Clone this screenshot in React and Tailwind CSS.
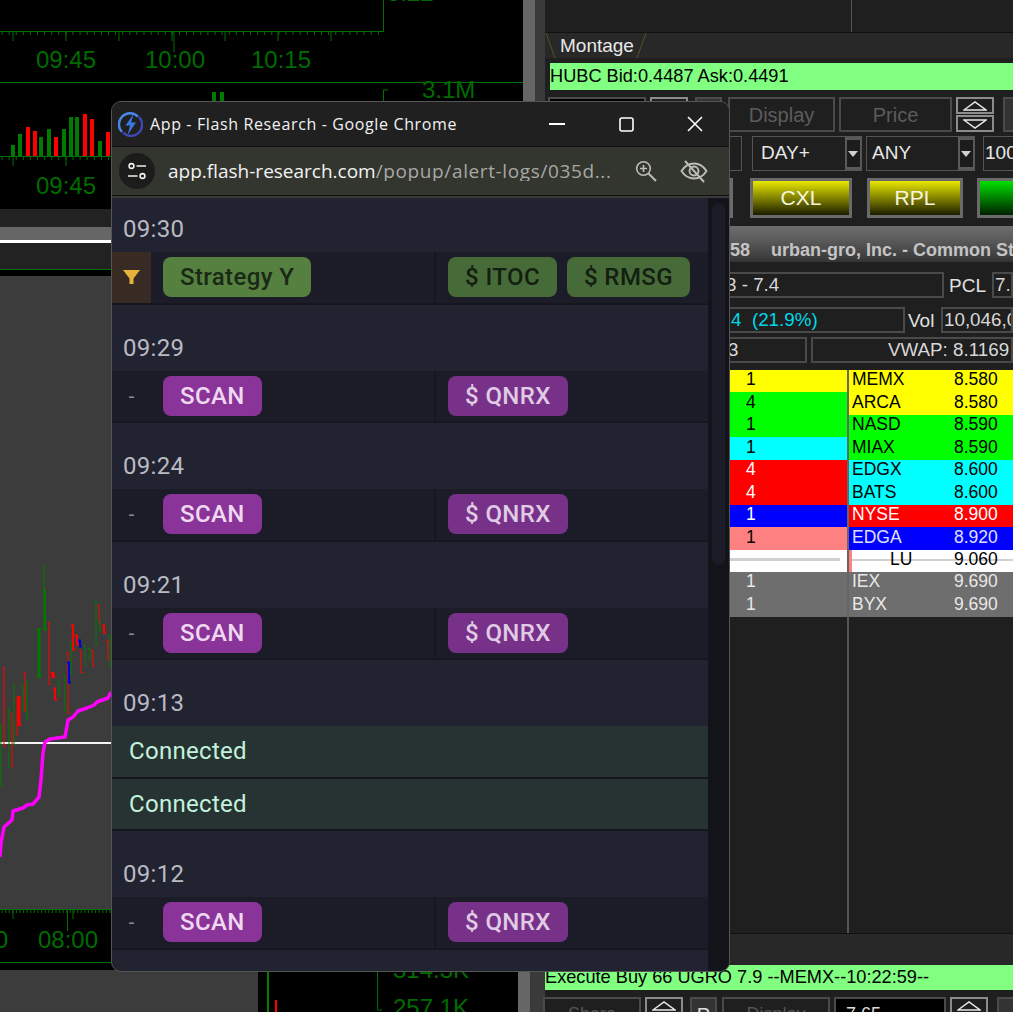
import React from 'react';

const arial = 'font-["Liberation_Sans",Arial,sans-serif]';
const chrome = 'font-["Open_Sans","Noto_Sans",sans-serif]';
const roboto = 'font-["Roboto",sans-serif]';

const volumeBars = [
  [11, 145, 'g'], [18, 134, 'g'], [26, 127, 'r'], [33, 131, 'r'], [39, 137, 'g'], [47, 129, 'g'], [54, 137, 'r'],
  [62, 129, 'g'], [69, 117, 'g'], [75, 117, 'g'], [83, 114, 'r'], [90, 119, 'r'], [98, 141, 'g'], [106, 132, 'r'],
  [212, 92, 'g'], [220, 92, 'g'],
];

const candles = [
  ['r', 4, 667, 747], ['g', 1, 724, 786], ['g', 9, 708, 768], ['g', 14, 684, 745], ['r', 12, 713, 767],
  ['r', 17, 700, 735], ['r', 19, 697, 725, 3], ['g', 23, 685, 712], ['r', 25, 672, 712], ['g', 27, 680, 720],
  ['g', 39, 629, 677, 3], ['g', 44, 565, 630], ['g', 45, 590, 630, 2], ['r', 49, 622, 685], ['r', 53, 673, 677, 3],
  ['r', 55, 688, 700, 2], ['g', 59, 680, 695], ['g', 65, 675, 712], ['r', 68, 652, 714], ['b', 69, 662, 683, 2],
  ['g', 71, 642, 675], ['r', 73, 625, 650, 2], ['r', 77, 635, 645, 2], ['b', 80, 640, 647, 2], ['r', 81, 650, 673],
  ['g', 85, 645, 665], ['g', 90, 648, 660], ['r', 93, 650, 667], ['g', 96, 600, 645], ['r', 99, 605, 623],
  ['r', 104, 625, 633, 2], ['g', 100, 620, 632], ['r', 108, 640, 660], ['g', 110, 635, 667],
];

const colors = { r: '#ff0000', g: '#007a00', b: '#0000e0' };

const vwapLine =
  '0,857 1,843 4,827 12,820 13,811 23,808 27,805 33,804 39,797 41,780 43,753 45,742 50,739 65,737 68,720 73,717 78,711 87,708 94,705 97,702 108,698 111,692';

const depthRows = [
  { size: '1', left: 'bg-[#ffff00] text-black', name: 'MEMX', price: '8.580', right: 'bg-[#ffff00] text-black' },
  { size: '4', left: 'bg-[#00ff00] text-black', name: 'ARCA', price: '8.580', right: 'bg-[#ffff00] text-black' },
  { size: '1', left: 'bg-[#00ff00] text-black', name: 'NASD', price: '8.590', right: 'bg-[#00ff00] text-black' },
  { size: '1', left: 'bg-[#00ffff] text-black', name: 'MIAX', price: '8.590', right: 'bg-[#00ff00] text-black' },
  { size: '4', left: 'bg-[#ff0000] text-white', name: 'EDGX', price: '8.600', right: 'bg-[#00ffff] text-black' },
  { size: '4', left: 'bg-[#ff0000] text-white', name: 'BATS', price: '8.600', right: 'bg-[#00ffff] text-black' },
  { size: '1', left: 'bg-[#0000ff] text-white', name: 'NYSE', price: '8.900', right: 'bg-[#ff0000] text-white' },
  { size: '1', left: 'bg-[#ff8080] text-black', name: 'EDGA', price: '8.920', right: 'bg-[#0000ff] text-[#e0e0ff]' },
  { size: '', left: 'bg-white text-black', name: 'LU', limit: true, price: '9.060', right: 'bg-white text-black' },
  { size: '1', left: 'bg-[#6e6e6e] text-[#e8e8e8]', name: 'IEX', price: '9.690', right: 'bg-[#6e6e6e] text-[#e8e8e8]' },
  { size: '1', left: 'bg-[#6e6e6e] text-[#e8e8e8]', name: 'BYX', price: '9.690', right: 'bg-[#6e6e6e] text-[#e8e8e8]' },
];

const Ticks = ({ width, major = 53, minor = 7.1 }) => {
  const out = [];
  for (let x = 2; x < width; x += minor) out.push(<line key={x} x1={x} x2={x} y1="0" y2="4" />);
  for (let x = 13; x < width; x += major) out.push(<line key={`m${x}`} x1={x} x2={x} y1="0" y2="10" />);
  return out;
};

const TimeLabel = ({ className, children }) => (
  <span className={`absolute text-[24px] leading-none text-[#006c00] ${arial} ${className}`}>{children}</span>
);

const Spinner = ({ className = '' }) => (
  <div className={`shrink-0 flex flex-col gap-[1px] w-[38px] h-[35px] ${className}`}>
    <div className="flex-1 flex items-center justify-center border-2 border-[#8c8c8c]">
      <svg width="24" height="10" viewBox="0 0 24 10"><path d="M1 9 12 1 23 9Z" fill="none" stroke="#e8e8e8" strokeWidth="1.5" /></svg>
    </div>
    <div className="flex-1 flex items-center justify-center border-2 border-[#8c8c8c]">
      <svg width="24" height="10" viewBox="0 0 24 10"><path d="M1 1 12 9 23 1Z" fill="none" stroke="#e8e8e8" strokeWidth="1.5" /></svg>
    </div>
  </div>
);

const Box = ({ className = '', children }) => (
  <div className={`shrink-0 h-[35px] flex items-center justify-center border-2 border-[#4a4a4a] text-[20px] ${className}`}>{children}</div>
);

const OrderButton = ({ className, children }) => (
  <div className={`shrink-0 h-[40px] flex items-center justify-center border-[3px] border-[#6a6a6a] text-[21px] text-[#f6f6e0] ${className}`}>
    {children}
  </div>
);

const Field = ({ className, children }) => (
  <div className={`shrink-0 flex items-center h-[26px] border-2 border-[#4a4a4a] text-[18.800px] text-[#d8d8d8] whitespace-nowrap overflow-hidden ${className}`}>
    {children}
  </div>
);

const Combo = ({ className, labelClass = 'pl-[8px]', label }) => (
  <div className={`shrink-0 h-[35px] flex border border-[#555] ${className}`}>
    <div className={`flex-1 flex items-center text-[19px] text-[#e8e8e8] ${labelClass}`}>{label}</div>
    <div className="w-[16px] bg-[#5a5a5a] flex items-center justify-center">
      <div className="w-[13px] h-[27px] bg-[#1c1c1c] flex items-center justify-center">
        <svg width="10" height="6" viewBox="0 0 10 6"><path d="M0 0H10L5 6Z" fill="#cfcfcf" /></svg>
      </div>
    </div>
  </div>
);

const LeftCharts = () => (
  <>
    {/* top chart */}
    <div className="absolute left-0 top-0 w-[523px] h-[209px] bg-black">
      <svg className="absolute left-0 top-0" width="523" height="209" stroke="#007000" fill="none">
        <path d="M0 31.5H383.5V0" />
        <g transform="translate(0 31)"><Ticks width="380" /></g>
        <line x1="174" x2="174" y1="31" y2="52" />
        <line x1="0" x2="523" y1="82.5" y2="82.5" />
        <path d="M388 90H383.5V102" />
        <line x1="0" x2="112" y1="156.5" y2="156.5" />
        <g transform="translate(0 156)"><Ticks width="112" /></g>
        {volumeBars.map(([x, top, c], i) => (
          <rect key={i} x={x} y={top} width="4" height={156 - top} fill={colors[c]} stroke="none" />
        ))}
      </svg>
      <TimeLabel className="left-[36px] top-[48px]">09:45</TimeLabel>
      <TimeLabel className="left-[145px] top-[48px]">10:00</TimeLabel>
      <TimeLabel className="left-[251px] top-[48px]">10:15</TimeLabel>
      <TimeLabel className="left-[387px] top-[-19px]">5.22</TimeLabel>
      <TimeLabel className="left-[422px] top-[78px]">3.1M</TimeLabel>
      <TimeLabel className="left-[36px] top-[174px]">09:45</TimeLabel>
    </div>

    {/* lower chart, header strips then the price pane */}
    <div className="absolute left-0 top-[209px] w-[258px] h-[803px] flex flex-col bg-[#3c3c3c]">
      <div className="h-[18px] bg-[#222]" />
      <div className="h-[13px] bg-[#666]" />
      <div className="h-[3px] bg-white" />
      <div className="h-[27px] bg-[#222] border-b border-[#007000]" />
      <div className="h-[6px] bg-black" />
      <div className="relative flex-1">
        <svg className="absolute left-0 top-0" width="258" height="700" viewBox="0 276 258 700" fill="none">
          <rect x="0" y="742" width="258" height="2" fill="#f4f4f4" />
          {candles.map(([c, x, y1, y2, w], i) => (
            <polyline
              key={i}
              points={`${x - 2},${y1 + 0.5} ${x},${y1 + 0.5} ${x},${y2 - 0.5} ${x + 2},${y2 - 0.5}`}
              stroke={colors[c]}
              strokeWidth={w || 1}
            />
          ))}
          <polyline points={vwapLine} stroke="#ff00ff" strokeWidth="3.500" strokeLinejoin="round" />
        </svg>
      </div>
      <div className="relative h-[61px] bg-black">
        <svg className="absolute left-0 top-0" width="258" height="61" stroke="#007000" fill="none">
          <line x1="0" x2="258" y1="0.5" y2="0.5" />
          <Ticks width="258" major={60} minor={3.6} />
          <line x1="67.500" x2="67.500" y1="0" y2="22" />
          <line x1="0" x2="258" y1="53.500" y2="53.500" />
        </svg>
        <TimeLabel className="left-[-52px] top-[19px] w-[60px] text-right">0</TimeLabel>
        <TimeLabel className="left-[38px] top-[19px]">08:00</TimeLabel>
      </div>
      <div className="h-[42px] bg-[#3c3c3c]" />
    </div>

    {/* volume pane bottom */}
    <div className="absolute left-[258px] top-[950px] w-[260px] h-[62px] bg-black">
      <svg className="absolute left-0 top-0" width="260" height="62" fill="none">
        <line x1="10" x2="10" y1="10" y2="62" stroke="#008000" strokeWidth="2" />
        <path d="M119.500 10V60H124" stroke="#007000" />
        <path d="M18 50V62" stroke="#ff0000" strokeWidth="2" />
      </svg>
      <TimeLabel className="left-[135px] top-[8px]">314.3K</TimeLabel>
      <TimeLabel className="left-[135px] top-[46px]">257.1K</TimeLabel>
    </div>
  </>
);

const TopMontage = () => (
  <div className={`absolute left-[523px] top-0 w-[490px] h-[960px] flex overflow-hidden bg-[#1f1f1f] ${arial}`}>
    <div className="w-[12px] shrink-0 bg-[#666]" />
    <div className="w-[10px] shrink-0 bg-[#3a3a3a]" />
    <div className="w-[468px] shrink-0 flex flex-col [&>*]:shrink-0">
      <div className="h-[32px] pl-[306px]"><div className="w-px h-full bg-[#555]" /></div>
      <div className="relative h-[26px] flex bg-[#282828] border-t border-[#111]">
        <svg className="absolute left-0 top-0" width="104" height="26" fill="none" stroke="#5c5220">
          <path d="M1 0 10 25M101 0 92 25" />
        </svg>
        <span className="pl-[15px] text-[19px] leading-[26px] text-[#e8e8e8]">Montage</span>
      </div>

      <div className="mt-[5px] ml-[5px] h-[27px] flex items-center bg-[#80ff80] text-black text-[18.200px] leading-none whitespace-nowrap">
        HUBC Bid:0.4487 Ask:0.4491
      </div>

      {/* order entry rows */}
      <div className="mt-[7px] ml-[3px] flex h-[35px]">
        <Box className="w-[98px] mr-[4px] bg-black" />
        <Spinner className="mr-[7px]" />
        <Box className="w-[27px] mr-[6px] bg-[#333]" />
        <Box className="w-[107px] mr-[4px] text-[#5c5c5c]">Display</Box>
        <Box className="w-[113px] mr-[4px] text-[#5c5c5c]">Price</Box>
        <Spinner className="mr-[9px]" />
        <Box className="w-[30px] bg-[#333]" />
      </div>
      <div className="mt-[4px] ml-[3px] flex h-[35px]">
        <div className="w-[194px] shrink-0 mr-[10px] border border-[#555]" />
        <Combo className="w-[110px] mr-[4px]" label="DAY+" />
        <Combo className="w-[109px] mr-[8px]" labelClass="pl-[5px]" label="ANY" />
        <div className="flex-1 flex items-center text-[19px] text-[#e8e8e8] border-y border-l border-[#555] pl-[1px] whitespace-nowrap">100</div>
      </div>
      <div className="mt-[7px] ml-[3px] flex">
        <OrderButton className="w-[185px] mr-[17px] bg-[linear-gradient(#ff6060,#400000)]" />
        <OrderButton className="w-[102px] mr-[15px] bg-[linear-gradient(#e8e800,#1c1c00)]">CXL</OrderButton>
        <OrderButton className="w-[96px] mr-[14px] bg-[linear-gradient(#e8e800,#1c1c00)]">RPL</OrderButton>
        <OrderButton className="flex-1 border-r-0 bg-[linear-gradient(#00e000,#002000)]" />
      </div>

      <div className="mt-[8px] h-[36px] flex gap-[21px] pt-[12px] pl-[185px] overflow-hidden whitespace-nowrap bg-[linear-gradient(#6e6e6e,#5a5a5a_40%,#343434)] font-bold text-[18px] leading-[24px] text-[#c4c4c4]">
        <span>58</span>
        <span>urban-gro, Inc. - Common Stock</span>
      </div>

      <div className="mt-[10px] ml-[3px] flex items-center h-[26px]">
        <Field className="w-[396px] pl-[176px]">3 - 7.4</Field>
        <span className="w-[48px] pl-[5px] text-[19px] leading-none text-[#e0e0e0]">PCL</span>
        <Field className="flex-1 pl-[1px]">7.0</Field>
      </div>
      <div className="mt-[9px] ml-[3px] flex items-center h-[26px]">
        <Field className="w-[357px] pl-[181px] text-[#00d8e8]!">4&nbsp;&nbsp;(21.9%)</Field>
        <span className="w-[36px] pl-[3px] text-[19px] leading-none text-[#e0e0e0]">Vol</span>
        <Field className="flex-1 pl-[1px]">10,046,0</Field>
      </div>
      <div className="mt-[4px] ml-[3px] flex h-[26px]">
        <Field className="w-[259px] mr-[4px] pl-[178px]">3</Field>
        <Field className="flex-1 pl-[75px]">VWAP: 8.1169</Field>
      </div>

      {/* depth */}
      <div className="mt-[7px] flex flex-col text-[17.500px] leading-none">
        {depthRows.map((row, i) => (
          <div key={i} className="flex h-[22.450px]">
            <div className={`w-[302px] flex items-center pl-[201px] pb-[2px] ${row.left}`}>
              {row.limit ? <div className="w-[113px] h-[3px] -ml-[19px] bg-[#d0d0d0]" /> : row.size}
            </div>
            <div className="w-[2px] bg-[#666]" />
            <div className={`relative flex-1 flex items-center pb-[2px] pl-[3px] ${row.right}`}>
              {row.limit && (
                <>
                  <div className="absolute left-0 top-0 w-[3px] h-full bg-[#ff8080]" />
                  <div className="absolute left-[3px] right-0 top-[9px] h-[2px] bg-[#d0d0d0]" />
                </>
              )}
              <span className={`relative w-[102px] ${row.limit ? 'pl-[38px]' : ''}`}>{row.name}</span>
              <span className="relative w-[43px] text-right">{row.price}</span>
            </div>
          </div>
        ))}
      </div>
      <div className="flex-1 pl-[302px]"><div className="w-[2px] h-[316px] bg-[#555]" /></div>
      <div className="h-[27px] bg-[#282828] border-t border-[#111]" />
    </div>
  </div>
);

const BottomMontage = () => (
  <div className={`absolute left-[518px] top-[960px] w-[495px] h-[52px] flex overflow-hidden bg-[#1f1f1f] ${arial}`}>
    <div className="w-[12px] shrink-0 bg-[#666]" />
    <div className="w-[15px] shrink-0 bg-[#3a3a3a]" />
    <div className="flex-1 flex flex-col [&>*]:shrink-0">
      <div className="h-[5px] bg-[#282828]" />
      <div className="h-[25px] flex items-center bg-[#80ff80] text-black text-[18.200px] leading-none whitespace-nowrap">
        Execute Buy 66 UGRO 7.9 --MEMX--10:22:59--
      </div>
      <div className="mt-[7px] -ml-[2px] flex h-[35px]">
        <Box className="w-[98px] mr-[4px] text-[#555] text-[18px]!">Share</Box>
        <Spinner className="mr-[7px]" />
        <Box className="w-[27px] mr-[5px] bg-[#333] text-[#ddd]">P</Box>
        <Box className="w-[108px] mr-[4px] text-[#555] text-[18px]!">Display</Box>
        <Box className="w-[112px] mr-[4px] bg-black text-[#ddd] text-[18px]! justify-start! pl-[10px]">7.65</Box>
        <Spinner className="mr-[9px]" />
        <Box className="w-[20px] bg-[#333]" />
      </div>
    </div>
  </div>
);

const Chip = ({ className, children }) => (
  <span className={`inline-flex items-center h-[40px] px-[17px] rounded-[8px] text-[24px] font-medium tracking-[0.4px] whitespace-nowrap ${className}`}>
    {children}
  </span>
);

const Section = ({ time, first, children }) => (
  <>
    <div className={`${first ? 'h-[54px]' : 'h-[66px]'} flex items-end pb-[7px] pl-[11px] text-[24px] leading-[32px] text-[#b9bac4] tracking-[0.3px]`}>
      {time}
    </div>
    {children}
  </>
);

const ScanRow = ({ ticker = 'QNRX' }) => (
  <div className="flex h-[52.500px] bg-[#1c1c28] border-b-2 border-[#16161e]">
    <div className="w-[39px] flex items-center justify-center text-[20px] text-[#8e8e96]">-</div>
    <div className="w-[285px] pl-[12px] pt-[5px] border-r-2 border-[#16161e]">
      <Chip className="bg-[#8a3399] text-[#eed9f0]">SCAN</Chip>
    </div>
    <div className="pl-[12px] pt-[5px]">
      <Chip className="bg-[#783188] text-[#e0cbe5]">$ {ticker}</Chip>
    </div>
  </div>
);

const ConnectedRow = () => (
  <div className="h-[52.500px] flex items-center pl-[17px] bg-[#263332] border-b-2 border-[#16161e] text-[24px] text-[#c3f2dc] tracking-[0.3px]">
    Connected
  </div>
);

const Popup = () => (
  <div className="absolute left-[111px] top-[101px] w-[619px] h-[871px] flex flex-col overflow-hidden rounded-[10px] border border-[#555] bg-[#222330]">
    {/* chrome title bar */}
    <div className={`h-[45px] flex items-center bg-[#202020] border-b border-[#111] ${chrome}`}>
      <svg className="ml-[6px]" width="25" height="25" viewBox="0 0 25 25" fill="none">
        <path d="M20 4.600A11 11 0 0 0 4 20" stroke="#4a86e8" strokeWidth="2.400" />
        <path d="M5 20.500A11 11 0 0 0 21 5" stroke="#3f48b8" strokeWidth="2.400" />
        <path d="M15.500 2 7.500 13.500h4.700L9.500 23 18 10.500h-4.800Z" fill="#3c78e0" />
      </svg>
      <span className="ml-[7px] text-[16px] text-[#f2f2f2] tracking-[0.63px] whitespace-nowrap">App - Flash Research - Google Chrome</span>
      <div className="ml-auto flex items-center">
        <svg className="mr-[54px]" width="16" height="2" viewBox="0 0 16 2"><rect width="16" height="2" fill="#fff" /></svg>
        <svg className="mr-[53px]" width="15" height="15" viewBox="0 0 15 15" fill="none"><rect x="1" y="1" width="13" height="13" rx="2" stroke="#fff" strokeWidth="1.600" /></svg>
        <svg className="mr-[26px]" width="16" height="16" viewBox="0 0 16 16" fill="none"><path d="M1 1 15 15M15 1 1 15" stroke="#fff" strokeWidth="1.600" /></svg>
      </div>
    </div>
    {/* address bar */}
    <div className={`h-[48px] flex items-center bg-[#33352f] ${chrome}`}>
      <div className="ml-[7px] w-[36px] h-[36px] rounded-full bg-[#1c1d1a] flex items-center justify-center">
        <svg width="20" height="18" viewBox="0 0 20 18" fill="none" stroke="#eee" strokeWidth="1.600">
          <circle cx="4.500" cy="4" r="2.400" />
          <path d="M9.500 4H19M1 14H10.500" />
          <circle cx="15.500" cy="14" r="2.400" />
        </svg>
      </div>
      <div className="ml-[13px] w-[444px] text-[19px] leading-none whitespace-nowrap overflow-hidden">
        <span className="text-[#f2f2f2]">app.flash-research.com</span>
        <span className="text-[#a8a8a4] tracking-[0.62px]">/popup/alert-logs/035d...</span>
      </div>
      <div className="ml-[23px] w-[22px]">
        <svg width="22" height="22" viewBox="0 0 22 22" fill="none" stroke="#bdbdb8" strokeWidth="1.600">
          <circle cx="8.500" cy="8.500" r="6.800" />
          <path d="M8.500 5v7M5 8.500h7" />
          <path d="M13.500 13.500 21 21" strokeWidth="2" />
        </svg>
      </div>
      <div className="ml-[23px] w-[28px]">
        <svg width="28" height="24" viewBox="0 0 28 24" fill="none" stroke="#bdbdb8" strokeWidth="1.900">
          <path d="M1.500 12C5 6.500 9 4.500 14 4.500S23 6.500 26.500 12C23 17.500 19 19.500 14 19.500S5 17.500 1.500 12Z" />
          <circle cx="14" cy="12" r="4.500" />
          <path d="M5 2 24 23" />
        </svg>
      </div>
    </div>
    <div className="h-[3px] bg-[#3a3a3a] border-t border-[#111]" />

    {/* log list + scrollbar */}
    <div className={`flex-1 flex overflow-hidden ${roboto}`}>
      <div className="w-[596px]">
        <Section time="09:30" first>
          <div className="flex h-[52.500px] bg-[#1c1c28] border-b-2 border-[#16161e]">
            <div className="w-[39px] flex items-center justify-center bg-[#372b24]">
              <svg width="17" height="14" viewBox="0 0 17 14"><path d="M0 0H17L10.500 8.500V14H6.500V8.500Z" fill="#e5b33b" /></svg>
            </div>
            <div className="w-[285px] pl-[12px] pt-[5px] border-r-2 border-[#16161e]">
              <Chip className="bg-[#55803f] text-[#1a2916]">Strategy Y</Chip>
            </div>
            <div className="flex gap-[10px] pl-[12px] pt-[5px]">
              <Chip className="bg-[#476b38] text-[#141e11]">$ ITOC</Chip>
              <Chip className="bg-[#476b38] text-[#141e11]">$ RMSG</Chip>
            </div>
          </div>
        </Section>
        <Section time="09:29"><ScanRow /></Section>
        <Section time="09:24"><ScanRow /></Section>
        <Section time="09:21"><ScanRow /></Section>
        <Section time="09:13">
          <ConnectedRow />
          <ConnectedRow />
        </Section>
        <Section time="09:12"><ScanRow /></Section>
      </div>
      <div className="flex-1 bg-[#13131a] px-[4px] pt-[5px]">
        <div className="h-[362px] rounded-[7px] bg-[#1c1c28]" />
      </div>
    </div>
  </div>
);

export default function App() {
  return (
    <div className="relative w-[1013px] h-[1012px] overflow-hidden bg-black">
      <LeftCharts />
      <TopMontage />
      <BottomMontage />
      <Popup />
    </div>
  );
}
